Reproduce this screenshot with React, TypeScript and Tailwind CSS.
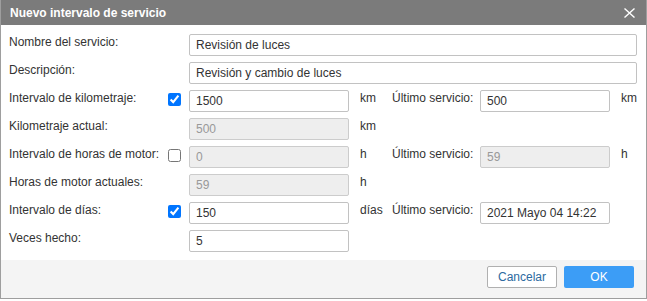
import React from "react";

const font = "font-['Liberation_Sans',Arial,sans-serif]";

function Field({ value, disabled, width }: { value: string; disabled?: boolean; width: string }) {
  return (
    <input
      readOnly
      value={value}
      className={`${width} h-[22px] rounded-[2px] border px-[6px] text-[12px] outline-none ${font} ${
        disabled ? "bg-[#eeeeee] border-[#cccccc] text-[#999999]" : "bg-white border-[#c2c2c2] text-[#333333]"
      }`}
    />
  );
}

function Check({ on }: { on?: boolean }) {
  return (
    <div className="w-[21px] shrink-0 pt-[3px]">
      {on !== undefined && (
        <input type="checkbox" readOnly checked={on} className="m-0 block h-[13px] w-[13px]" />
      )}
    </div>
  );
}

function Label({ text, w }: { text: string; w: string }) {
  return <div className={`${w} shrink-0 leading-[16px] text-[#333333]`}>{text}</div>;
}

export default function App() {
  return (
    <div className={`w-[647px] h-[299px] bg-white border-x border-b border-[#9e9e9e] flex flex-col text-[12px] ${font}`}>
      {/* Header */}
      <div className="h-[25px] bg-[#7b7b7b] flex items-center justify-between pl-[9px] pr-[11px]">
        <span className="font-bold text-white leading-[14px]">Nuevo intervalo de servicio</span>
        <svg width="11" height="10" viewBox="0 0 11 10" className="mt-[1px]">
          <path d="M0.5 0.5 L10.5 9.5 M10.5 0.5 L0.5 9.5" stroke="white" strokeWidth="1.4" />
        </svg>
      </div>

      {/* Body */}
      <div className="flex flex-col gap-[6px] px-[8px] pt-[9px] pb-[8px]">
        <div className="flex">
          <Label text="Nombre del servicio:" w="w-[159px]" />
          <Check />
          <Field value="Revisión de luces" width="w-[448px]" />
        </div>
        <div className="flex">
          <Label text="Descripción:" w="w-[159px]" />
          <Check />
          <Field value="Revisión y cambio de luces" width="w-[448px]" />
        </div>
        <div className="flex">
          <Label text="Intervalo de kilometraje:" w="w-[159px]" />
          <Check on />
          <Field value="1500" width="w-[160px]" />
          <Label text="km" w="w-[43px] pl-[11px]" />
          <Label text="Último servicio:" w="w-[88px]" />
          <Field value="500" width="w-[130px]" />
          <Label text="km" w="pl-[11px]" />
        </div>
        <div className="flex">
          <Label text="Kilometraje actual:" w="w-[159px]" />
          <Check />
          <Field value="500" disabled width="w-[160px]" />
          <Label text="km" w="w-[43px] pl-[11px]" />
        </div>
        <div className="flex">
          <Label text="Intervalo de horas de motor:" w="w-[159px]" />
          <Check on={false} />
          <Field value="0" disabled width="w-[160px]" />
          <Label text="h" w="w-[43px] pl-[11px]" />
          <Label text="Último servicio:" w="w-[88px]" />
          <Field value="59" disabled width="w-[130px]" />
          <Label text="h" w="pl-[11px]" />
        </div>
        <div className="flex">
          <Label text="Horas de motor actuales:" w="w-[159px]" />
          <Check />
          <Field value="59" disabled width="w-[160px]" />
          <Label text="h" w="w-[43px] pl-[11px]" />
        </div>
        <div className="flex">
          <Label text="Intervalo de días:" w="w-[159px]" />
          <Check on />
          <Field value="150" width="w-[160px]" />
          <Label text="días" w="w-[43px] pl-[11px]" />
          <Label text="Último servicio:" w="w-[88px]" />
          <Field value="2021 Mayo 04 14:22" width="w-[130px]" />
        </div>
        <div className="flex">
          <Label text="Veces hecho:" w="w-[159px]" />
          <Check />
          <Field value="5" width="w-[160px]" />
        </div>
      </div>

      {/* Footer */}
      <div className="flex-1 bg-[#f4f4f4] flex justify-end items-start gap-[7px] pt-[6px] pr-[12px]">
        <button className="w-[70px] h-[22px] rounded-[2px] border border-[#b0b0b0] bg-white text-[#2c6aa0] leading-[14px]">
          Cancelar
        </button>
        <button className="w-[70px] h-[22px] rounded-[2px] bg-[#3c9df6] text-white leading-[14px]">
          OK
        </button>
      </div>
    </div>
  );
}
